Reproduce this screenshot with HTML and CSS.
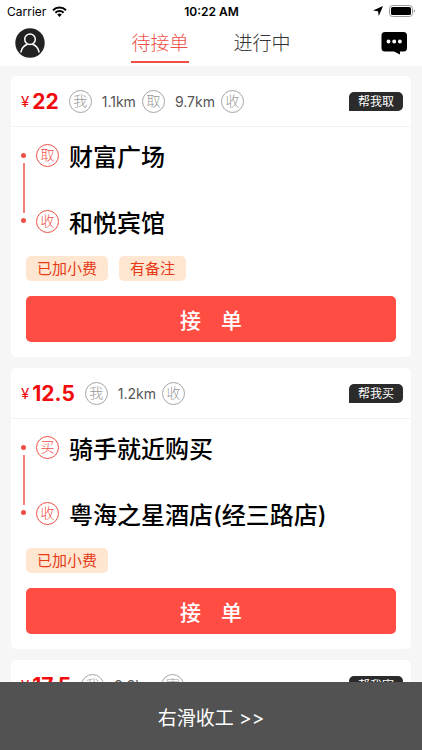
FILE: index.html
```html
<!DOCTYPE html>
<html lang="zh-CN">
<head>
<meta charset="utf-8">
<meta name="viewport" content="width=device-width, initial-scale=1">
<title>待接单</title>
<link rel="stylesheet" href="styles.css">
</head>
<body>
<div class="app">
  <div class="status">
    <div class="status-left">
      <span>Carrier</span>
      <svg width="15" height="11" viewBox="0 0 15 11" aria-hidden="true">
        <g fill="none" stroke="#000" stroke-width="2">
          <path d="M1 4.2a9.2 9.2 0 0 1 13 0"/>
          <path d="M3.4 6.8a5.800 5.800 0 0 1 8.200 0"/>
        </g>
        <path d="M5.200 8.500a3.300 3.300 0 0 1 4.600 0L7.500 10.900z"/>
      </svg>
    </div>
    <div class="status-time">10:22 AM</div>
    <div class="status-right">
      <svg width="10" height="10" viewBox="0 0 10 10" aria-hidden="true"><path d="M10 0 5.800 10 5 5.200 0 4.600z"/></svg>
      <svg width="27" height="12" viewBox="0 0 27 12" aria-hidden="true">
        <rect x=".5" y=".5" width="23" height="11" rx="3" fill="none" stroke="#999"/>
        <rect x="2" y="2" width="20" height="8" rx="1.6"/>
        <path d="M24.800 4.200v3.600c1.700-.6 1.700-3 0-3.600z" fill="#999"/>
      </svg>
    </div>
  </div>
  <header class="nav">
    <button class="icon-btn" type="button" aria-label="个人中心">
      <svg width="30" height="30" viewBox="0 0 30 30">
        <circle cx="15" cy="15" r="14.7" fill="#222"/>
        <g fill="none" stroke="#fff" stroke-width="1.5">
          <circle cx="15" cy="11.3" r="5.3"/>
          <path d="M5.800 24.500c.9-4.900 3.600-7.200 6.700-8.300M24.200 24.500c-.9-4.900-3.600-7.200-6.700-8.300"/>
        </g>
      </svg>
    </button>
    <nav class="tabs">
      <a class="tab tab-active" href="#pending">待接单</a>
      <a class="tab" href="#active">进行中</a>
    </nav>
    <button class="icon-btn icon-btn-end" type="button" aria-label="消息">
      <svg width="26" height="24" viewBox="0 0 26 24">
        <path d="M4 1h18.500a3.500 3.500 0 0 1 3.500 3.500v12.500a3.500 3.500 0 0 1-3.500 3.500H19v3L13 20.500H4a3.500 3.500 0 0 1-3.500-3.500V4.500A3.500 3.500 0 0 1 4 1z"/>
        <g fill="#fff"><circle cx="7.500" cy="10.500" r="1.900"/><circle cx="13.200" cy="10.500" r="1.900"/><circle cx="18.900" cy="10.500" r="1.900"/></g>
      </svg>
    </button>
  </header>
  <main class="orders" id="pending">
    <article class="card">
      <div class="card-head">
        <span class="yen">¥</span><strong class="price">22</strong>
        <span class="badge">我</span><span class="dist">1.1km</span><span class="badge">取</span><span class="dist">9.7km</span><span class="badge">收</span>
        <span class="kind">帮我取</span>
      </div>
      <div class="route">
        <div class="rail"><i class="dot"></i><i class="line"></i><i class="dot"></i></div>
        <div class="stop"><span class="badge badge-red">取</span><h2>财富广场</h2></div>
        <div class="stop"><span class="badge badge-red">收</span><h2>和悦宾馆</h2></div>
      </div>
      <div class="tags"><span class="tag">已加小费</span><span class="tag">有备注</span></div>
      <button class="accept" type="button"><span>接</span><span>单</span></button>
    </article>
    <article class="card">
      <div class="card-head">
        <span class="yen">¥</span><strong class="price">12.5</strong>
        <span class="badge">我</span><span class="dist">1.2km</span><span class="badge">收</span>
        <span class="kind">帮我买</span>
      </div>
      <div class="route">
        <div class="rail"><i class="dot"></i><i class="line"></i><i class="dot"></i></div>
        <div class="stop"><span class="badge badge-red">买</span><h2>骑手就近购买</h2></div>
        <div class="stop"><span class="badge badge-red">收</span><h2>粤海之星酒店(经三路店)</h2></div>
      </div>
      <div class="tags"><span class="tag">已加小费</span></div>
      <button class="accept" type="button"><span>接</span><span>单</span></button>
    </article>
    <article class="card">
      <div class="card-head">
        <span class="yen">¥</span><strong class="price">17.5</strong>
        <span class="badge">我</span><span class="dist">2.2km</span><span class="badge">寄</span>
        <span class="kind">帮我寄</span>
      </div>
    </article>
  </main>
  <button class="off-duty" type="button">右滑收工 &gt;&gt;</button>
</div>
</body>
</html>
```
FILE: styles.css
```css
* {
  box-sizing: border-box;
}

body {
  margin: 0;
  background: #f6f6f6;
  color: #000;
  font-family: Inter, "Noto Sans CJK SC", sans-serif;
}

button {
  border: 0;
  padding: 0;
  font: inherit;
  cursor: pointer;
}

.app {
  display: flex;
  flex-direction: column;
  height: 100vh;
  overflow: hidden;
}

.status {
  display: grid;
  grid-template-columns: 1fr auto 1fr;
  align-items: center;
  flex: none;
  height: 22px;
  padding: 0 6px 0 7px;
  background: #fff;
  font-size: 12px;
}

.status-left,
.status-right {
  display: flex;
  align-items: center;
  gap: 6px;
}

.status-right {
  justify-content: flex-end;
}

.status-time {
  font-weight: 600;
}

.nav {
  display: flex;
  align-items: flex-start;
  justify-content: space-between;
  flex: none;
  height: 44px;
  padding: 6px 15px 0;
  background: #fff;
}

.icon-btn {
  display: flex;
  align-items: center;
  width: 30px;
  height: 30px;
  background: none;
}

.icon-btn-end {
  justify-content: flex-end;
}

.tabs {
  display: flex;
  gap: 45px;
}

.tab {
  height: 35px;
  color: #333;
  font-size: 19px;
  font-weight: 300;
  line-height: 31px;
  text-decoration: none;
}

.tab-active {
  border-bottom: 2px solid #f04f47;
  color: #f04f47;
}

.orders {
  display: flex;
  flex: 1;
  flex-direction: column;
  gap: 11px;
  min-height: 0;
  padding: 10px 11px 0;
  overflow: hidden;
}

.card {
  flex: none;
  padding-bottom: 15px;
  border-radius: 5px;
  background: #fff;
}

.card-head {
  display: flex;
  align-items: center;
  height: 51px;
  padding: 0 8px 0 10px;
  border-bottom: 1px solid #f3f3f3;
}

.yen {
  margin-right: 3px;
  color: #f00c0c;
  font-size: 15px;
}

.price {
  margin-right: 10px;
  color: #f00c0c;
  font-size: 21px;
  font-weight: 700;
}

.badge {
  display: flex;
  align-items: center;
  justify-content: center;
  flex: none;
  width: 23px;
  height: 23px;
  border: 1px solid #a5a5a5;
  border-radius: 50%;
  color: #999;
  font-size: 14px;
  font-weight: 300;
  line-height: 20px;
}

.badge-red {
  border-color: #f04f47;
  color: #f04f47;
}

.dist {
  margin: 0 6px 0 10px;
  color: #555;
  font-size: 14px;
}

.kind {
  margin-left: auto;
  padding: 0 9px;
  border-radius: 5px 5px 5px 0;
  background: #2b2b2b;
  color: #fff;
  font-size: 12px;
  line-height: 19px;
}

.route {
  display: grid;
  grid-template-columns: 5px 1fr;
  column-gap: 10px;
  row-gap: 30px;
  padding: 10px 10px 0;
}

.rail {
  display: flex;
  flex-direction: column;
  align-items: center;
  grid-row: 1 / 3;
  gap: 5px;
  padding: 16px 0;
}

.dot {
  width: 5px;
  height: 5px;
  border-radius: 50%;
  background: #f04f47;
}

.line {
  flex: 1;
  width: 2px;
  background: #f3827b;
}

.stop {
  display: flex;
  align-items: center;
  gap: 10px;
  height: 36px;
}

.stop h2 {
  margin: 0;
  padding-top: 5px;
  font-size: 24px;
  font-weight: 500;
  line-height: 36px;
}

.tags {
  display: flex;
  gap: 11px;
  margin: 17px 15px 15px;
}

.tag {
  padding: 0 11px;
  border-radius: 5px;
  background: #fee6d0;
  color: #e63a17;
  font-size: 15px;
  line-height: 25px;
}

.accept {
  display: flex;
  align-items: center;
  justify-content: center;
  gap: 20px;
  width: calc(100% - 30px);
  height: 46px;
  margin: 0 15px;
  border-radius: 5px;
  background: #ff4d44;
  color: #fff;
  font-size: 21px;
  font-weight: 500;
}

.off-duty {
  flex: none;
  height: 68px;
  background: #525252;
  color: #fff;
  font-size: 19px;
}
```
